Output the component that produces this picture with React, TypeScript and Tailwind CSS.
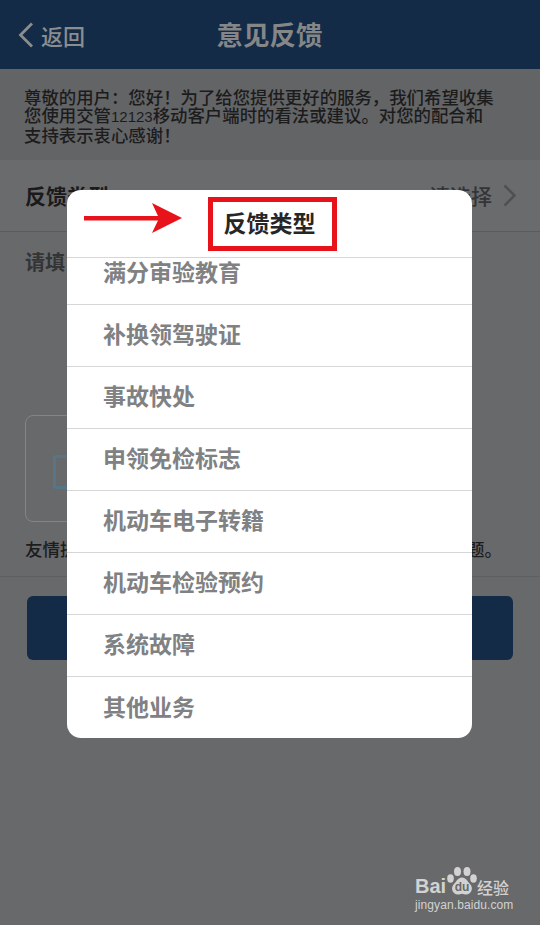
const font = { fontFamily: '"Noto Sans CJK SC", "Liberation Sans", sans-serif' };
const latin = { fontFamily: '"Liberation Sans", sans-serif' };
const items = ["补换领驾驶证", "事故快处", "申领免检标志", "机动车电子转籍", "机动车检验预约", "系统故障", "其他业务"];

function Paw() {
  return (
    <div className="relative w-[30px] h-[30px] shrink-0">
      <svg viewBox="0 0 30 30" className="w-[30px] h-[30px]" fill="#d2d2d2">
        <ellipse cx="10.500" cy="4.500" rx="3.500" ry="4.500" />
        <ellipse cx="20" cy="4.500" rx="3.500" ry="4.500" />
        <ellipse cx="3.500" cy="11.500" rx="3.300" ry="4.200" />
        <ellipse cx="26.500" cy="11.500" rx="3.300" ry="4.200" />
        <path d="M15 10.500c4 0 5.500 4 8 6.500 3.500 3.500 2 10.500-4 10.500-1.500 0-2.500-.8-4-.8s-2.500.8-4 .8c-6 0-7.500-7-4-10.500 2.500-2.500 4-6.500 8-6.500z" />
      </svg>
      <span className="absolute left-0 right-0 top-[14px] text-center text-[12px] leading-[12px] font-bold text-[#68696b]" style={latin}>du</span>
    </div>
  );
}

export default function App() {
  return (
    <div className="relative w-[540px] h-[925px] overflow-hidden bg-[#68696b]" style={font}>
      <header className="h-[69px] bg-[#132b47] flex items-center relative">
        <div className="flex items-center pl-[18px] gap-[7px] text-[#8b8d8f]">
          <svg width="16" height="26" viewBox="0 0 16 26" fill="none" stroke="#8b8d8f" strokeWidth="2.800">
            <path d="M14 1.500 2.500 13 14 24.500" />
          </svg>
          <span className="text-[22px] leading-none font-medium">返回</span>
        </div>
        <h1 className="absolute left-0 right-0 text-center text-[26.500px] leading-none font-bold text-[#858688] pr-[1px]">意见反馈</h1>
      </header>

      <section className="h-[91px] bg-[#636466] pl-[24px] pt-[19px] text-[17.400px] leading-[18px] font-medium text-[#1c1c1d]">
        <p>尊敬的用户：您好！为了给您提供更好的服务，我们希望收集</p>
        <p>您使用交管<span className="text-[15px]" style={latin}>12123</span>移动客户端时的看法或建议。对您的配合和</p>
        <p>支持表示衷心感谢！</p>
      </section>

      <div className="h-[72px] bg-[#6a6b6d] border-b border-[#5a5b5d] flex items-center justify-between pl-[25px] pr-[24px]">
        <span className="text-[21px] font-bold text-[#1a1a1b]">反馈类型</span>
        <div className="flex items-center gap-[11px]">
          <span className="text-[21px] font-medium text-[#333435]">请选择</span>
          <svg width="13" height="23" viewBox="0 0 13 23" fill="none" stroke="#4f5052" strokeWidth="2.500">
            <path d="M1.500 1.500l10 10-10 10" />
          </svg>
        </div>
      </div>

      <div className="h-[345px] pl-[25px] pt-[17px] border-b border-[#5e5f61]">
        <p className="text-[20px] leading-[26px] font-bold text-[#333435]">请填</p>
        <div className="mt-[140px] w-[107px] h-[107px] rounded-[8px] border border-[#7a8790] flex items-center pl-[27px] pt-[6px]">
          <div className="w-[30px] h-[34px] rounded-[3px] border-[3px] border-[#587586]" />
        </div>
        <div className="mt-[16px] w-[477px] flex justify-between text-[17.500px] leading-[22px] font-medium text-[#1c1c1d]">
          <span>友情提</span>
          <span>题。</span>
        </div>
      </div>

      <div className="px-[27px] pt-[19px]">
        <div className="h-[64px] rounded-[6px] bg-[#132b47]" />
      </div>

      <div className="absolute left-[67px] top-[190px] w-[405px] h-[548px] rounded-[14px] bg-white overflow-hidden">
        <div className="h-[68px] pb-[3px] border-b border-[#d6d6d6] flex items-center justify-center">
          <span className="text-[23px] font-bold text-[#262626]">反馈类型</span>
        </div>
        <div className="h-[47px] border-b border-[#d6d6d6] pl-[36px] text-[23px] leading-[26px] font-bold text-[#808183]">满分审验教育</div>
        {items.map((t, i) => (
          <div key={t} className={`h-[62px] pb-[4px] flex items-center pl-[36px] text-[23px] font-bold text-[#808183] ${i < items.length - 1 ? "border-b border-[#d6d6d6]" : ""}`}>
            {t}
          </div>
        ))}
      </div>

      <div className="absolute left-[208px] top-[197px] w-[129px] h-[54px] border-[5px] border-[#e8121a]" />
      <svg className="absolute left-[83px] top-[203px]" width="99" height="30" viewBox="0 0 99 30">
        <path d="M1 13h74L69 0l30 15-30 15 6-12.500H1z" fill="#e8121a" />
      </svg>

      <div className="absolute left-[415px] top-[867px] w-[110px] text-[#d2d2d2]">
        <div className="flex items-end">
          <span className="w-[32px] text-[20px] leading-[22px] font-bold" style={latin}>Bai</span>
          <Paw />
          <span className="text-[16px] leading-[20px] font-medium">经验</span>
        </div>
        <div className="text-[12px] leading-[14px] mt-[1px] tracking-[0.100px]" style={latin}>jingyan.baidu.com</div>
      </div>
    </div>
  );
}
